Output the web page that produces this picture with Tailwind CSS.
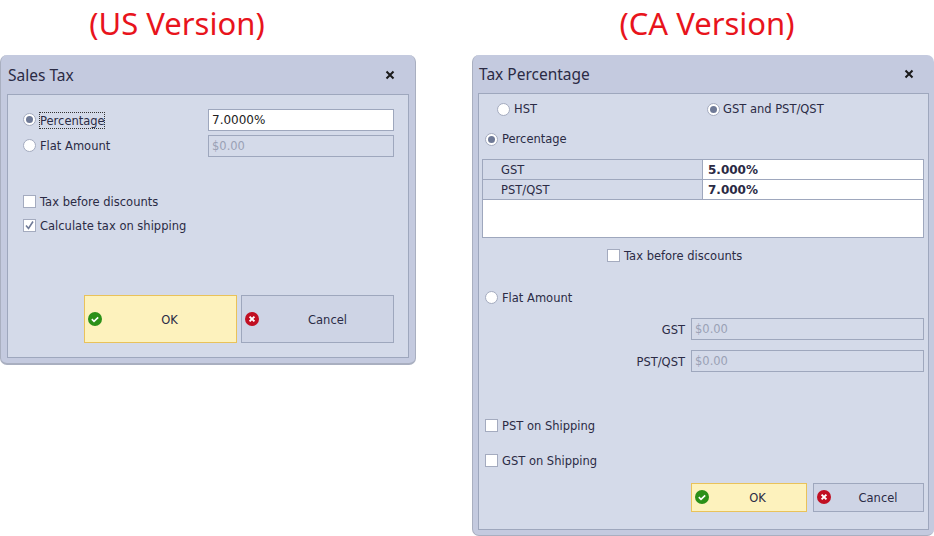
<!DOCTYPE html>
<html lang="en">
<head>
<meta charset="UTF-8">
<title>Sales Tax dialogs</title>
<script src="https://cdn.jsdelivr.net/npm/@tailwindcss/browser@4"></script>
</head>
<body class="bg-white w-[934px] h-[536px] overflow-hidden font-['DejaVu_Sans',sans-serif] text-[11.5px] text-[#2b2b45]">
<div class="flex gap-[56px] w-[934px]">

  <!-- US version -->
  <div class="w-[416px] shrink-0">
    <div class="h-[55px] flex items-center justify-center pb-[9px] pr-[62px] text-[#e8141c] text-[31px] font-['Noto_Sans',sans-serif]">(US Version)</div>
    <div class="h-[310px] bg-[#c4cadf] rounded-[7px] border-b-2 border-x border-[#a9afc0] flex flex-col">
      <div class="h-[39px] shrink-0 flex items-center justify-between pl-[7px] pr-[20px] text-[15.5px] font-['Noto_Sans',sans-serif]">
        <span class="pt-[2px]">Sales Tax</span>
        <svg class="w-[10px] h-[10px]" viewBox="0 0 10 10"><path d="M1.5 1.5l7 7M8.5 1.5l-7 7" stroke="#1a1a1a" stroke-width="2"/></svg>
      </div>
      <div class="mx-[6px] h-[264px] border border-[#9ea7bd] bg-[#d4dae9] pt-[14px] pl-[15px] pr-[14px]">
        <div class="flex items-center h-[22px]">
          <span class="w-[13px] h-[13px] mb-[2px] rounded-full bg-white border border-[#a4abbf] flex items-center justify-center"><span class="w-[7px] h-[7px] rounded-full bg-[#6f7a97]"></span></span>
          <span class="ml-[3px] w-[66px] h-[17px] leading-[16px] border border-dotted border-[#333]">Percentage</span>
          <div class="ml-[103px] w-[186px] h-[22px] bg-white border border-[#9ea7bd] pl-[3px] leading-[21px] text-[12px] text-[#222]">7.0000%</div>
        </div>
        <div class="flex items-center h-[22px] mt-[4px]">
          <span class="w-[13px] h-[13px] mb-[2px] rounded-full bg-white border border-[#a4abbf]"></span>
          <span class="ml-[4px] w-[168px] pt-[2px]">Flat Amount</span>
          <div class="w-[186px] h-[22px] border border-[#9ea7bd] pl-[3px] leading-[21px] text-[#9aa1b5]">$0.00</div>
        </div>
        <div class="flex items-center h-[14px] mt-[37px]">
          <span class="w-[13px] h-[13px] bg-white border border-[#a4abbf]"></span>
          <span class="ml-[4px] pt-[4px]">Tax before discounts</span>
        </div>
        <div class="flex items-center h-[14px] mt-[10px]">
          <span class="w-[13px] h-[13px] bg-white border border-[#a4abbf] flex items-center justify-center">
            <svg class="w-[11px] h-[11px]" viewBox="0 0 11 11"><path d="M2 5.5l2.5 3L9 1.5" fill="none" stroke="#6f7a97" stroke-width="1.6"/></svg>
          </span>
          <span class="ml-[4px] pt-[4px]">Calculate tax on shipping</span>
        </div>
        <div class="flex gap-[4px] mt-[63px] ml-[61px]">
          <div class="relative w-[153px] h-[48px] pl-[18px] pt-[4px] bg-[#fdf2bd] border border-[#e9c25a] flex items-center justify-center">
            <svg class="absolute left-[3px] top-[16px] w-[14px] h-[14px]" viewBox="0 0 14 14"><circle cx="7" cy="7" r="7" fill="#2b9018"/><path d="M3.8 7.2l2.2 2.1 4.2-4" fill="none" stroke="#fff" stroke-width="1.6"/></svg>
            OK
          </div>
          <div class="relative w-[153px] h-[48px] pl-[20px] pt-[4px] bg-[#ced4e5] border border-[#9ea7bd] flex items-center justify-center">
            <svg class="absolute left-[3px] top-[16px] w-[14px] h-[14px]" viewBox="0 0 14 14"><circle cx="7" cy="7" r="7" fill="#c10f22"/><path d="M4.6 4.6l4.8 4.8M9.4 4.6l-4.8 4.8" fill="none" stroke="#fff" stroke-width="2"/></svg>
            Cancel
          </div>
        </div>
      </div>
    </div>
  </div>

  <!-- CA version -->
  <div class="w-[462px] shrink-0">
    <div class="h-[55px] flex items-center justify-center pb-[9px] pl-[8px] text-[#e8141c] text-[31px] font-['Noto_Sans',sans-serif]">(CA Version)</div>
    <div class="h-[481px] bg-[#c4cadf] rounded-[7px] border-l border-b border-[#a9afc0] flex flex-col">
      <div class="h-[38px] shrink-0 flex items-center justify-between pl-[6px] pr-[20px] text-[15.5px] font-['Noto_Sans',sans-serif]">
        <span class="pt-[2px]">Tax Percentage</span>
        <svg class="w-[10px] h-[10px]" viewBox="0 0 10 10"><path d="M1.5 1.5l7 7M8.5 1.5l-7 7" stroke="#1a1a1a" stroke-width="2"/></svg>
      </div>
      <div class="mx-[5px] h-[437px] border border-[#9ea7bd] bg-[#d4dae9] pl-[3px] pr-[3px]">
        <div class="flex items-center h-[14px] mt-[8px] pl-[15px]">
          <span class="w-[13px] h-[13px] rounded-full bg-white border border-[#a4abbf]"></span>
          <span class="ml-[4px] w-[193px] pt-[2px]">HST</span>
          <span class="w-[13px] h-[13px] rounded-full bg-white border border-[#a4abbf] flex items-center justify-center"><span class="w-[7px] h-[7px] rounded-full bg-[#6f7a97]"></span></span>
          <span class="ml-[3px] pt-[2px]">GST and PST/QST</span>
        </div>
        <div class="flex items-center h-[14px] mt-[16px] pl-[3px]">
          <span class="w-[13px] h-[13px] rounded-full bg-white border border-[#a4abbf] flex items-center justify-center"><span class="w-[7px] h-[7px] rounded-full bg-[#6f7a97]"></span></span>
          <span class="ml-[4px] pt-[2px]">Percentage</span>
        </div>
        <div class="w-[442px] h-[79px] mt-[13px] bg-white border border-[#9ea7bd]">
          <div class="flex h-[20px] border-b border-[#9ea7bd]">
            <div class="w-[220px] bg-[#d4dae9] border-r border-[#9ea7bd] pl-[18px] leading-[20px]">GST</div>
            <div class="pl-[5px] leading-[20px] font-bold text-[12px]">5.000%</div>
          </div>
          <div class="flex h-[20px] border-b border-[#9ea7bd]">
            <div class="w-[220px] bg-[#d4dae9] border-r border-[#9ea7bd] pl-[18px] leading-[20px]">PST/QST</div>
            <div class="pl-[5px] leading-[20px] font-bold text-[12px]">7.000%</div>
          </div>
        </div>
        <div class="flex items-center h-[14px] mt-[10px] pl-[125px]">
          <span class="w-[13px] h-[13px] bg-white border border-[#a4abbf]"></span>
          <span class="ml-[4px] pt-[4px]">Tax before discounts</span>
        </div>
        <div class="flex items-center h-[14px] mt-[28px] pl-[3px]">
          <span class="w-[13px] h-[13px] rounded-full bg-white border border-[#a4abbf]"></span>
          <span class="ml-[4px] pt-[4px]">Flat Amount</span>
        </div>
        <div class="flex items-center justify-end h-[22px] mt-[14px] gap-[6px] pr-[1px]">
          <span class="pt-[4px]">GST</span>
          <div class="w-[233px] h-[22px] border border-[#9ea7bd] pl-[3px] leading-[20px] text-[#9aa1b5]">$0.00</div>
        </div>
        <div class="flex items-center justify-end h-[22px] mt-[10px] gap-[6px] pr-[1px]">
          <span class="pt-[4px]">PST/QST</span>
          <div class="w-[233px] h-[22px] border border-[#9ea7bd] pl-[3px] leading-[20px] text-[#9aa1b5]">$0.00</div>
        </div>
        <div class="flex items-center h-[14px] mt-[46px] pl-[3px]">
          <span class="w-[13px] h-[13px] bg-white border border-[#a4abbf]"></span>
          <span class="ml-[4px] pt-[4px]">PST on Shipping</span>
        </div>
        <div class="flex items-center h-[14px] mt-[21px] pl-[3px]">
          <span class="w-[13px] h-[13px] bg-white border border-[#a4abbf]"></span>
          <span class="ml-[4px] pt-[4px]">GST on Shipping</span>
        </div>
        <div class="flex justify-end gap-[6px] mt-[16px] pr-[1px]">
          <div class="relative w-[116px] h-[29px] pl-[17px] pt-[2px] bg-[#fdf2bd] border border-[#e9c25a] flex items-center justify-center">
            <svg class="absolute left-[3px] top-[6px] w-[14px] h-[14px]" viewBox="0 0 14 14"><circle cx="7" cy="7" r="7" fill="#2b9018"/><path d="M3.8 7.2l2.2 2.1 4.2-4" fill="none" stroke="#fff" stroke-width="1.6"/></svg>
            OK
          </div>
          <div class="relative w-[111px] h-[29px] pl-[19px] pt-[2px] bg-[#ced4e5] border border-[#9ea7bd] flex items-center justify-center">
            <svg class="absolute left-[3px] top-[6px] w-[14px] h-[14px]" viewBox="0 0 14 14"><circle cx="7" cy="7" r="7" fill="#c10f22"/><path d="M4.6 4.6l4.8 4.8M9.4 4.6l-4.8 4.8" fill="none" stroke="#fff" stroke-width="2"/></svg>
            Cancel
          </div>
        </div>
      </div>
    </div>
  </div>

</div>
</body>
</html>
